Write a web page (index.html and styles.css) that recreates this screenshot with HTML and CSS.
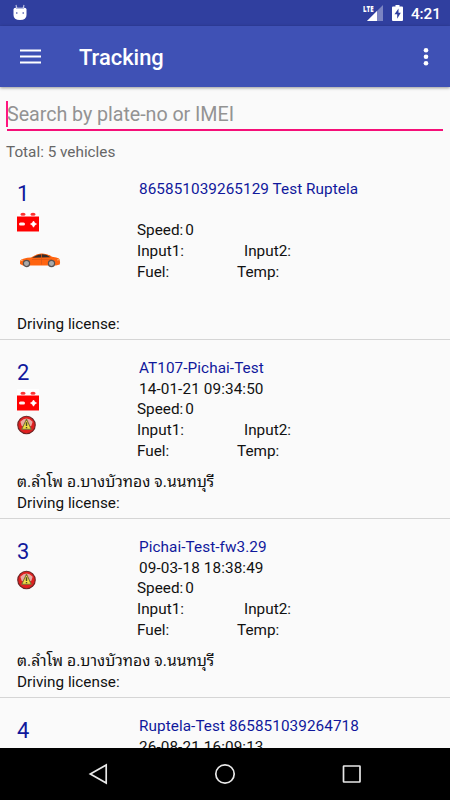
FILE: index.html
```html
<!DOCTYPE html>
<html lang="en">
<head>
<meta charset="utf-8">
<title>Tracking</title>
<link rel="stylesheet" href="styles.css">
</head>
<body>
<svg class="defs" width="0" height="0" aria-hidden="true">
  <defs>
    <symbol id="battery" viewBox="0 0 22 22">
      <path fill="#fff" d="M0 0h22v22H0z"/>
      <path fill="#f00" d="M0 6.500h22v15H0z"/>
      <ellipse cx="6" cy="4.300" rx="2.600" ry="1.500" fill="#f33"/><ellipse cx="16" cy="4.300" rx="2.600" ry="1.500" fill="#f33"/>
      <rect x="2" y="12.500" width="6" height="3" rx="1.500" fill="#fff0ee"/>
      <path fill="#fff" d="M16.500 11l1.200 1.900 1.800 1.100-1.800 1.200-1.200 2-1.200-2-1.800-1.200 1.800-1.100z" stroke="#fff" stroke-width=".7"/>
    </symbol>
    <symbol id="alert" viewBox="0 0 20 20">
      <circle cx="10" cy="10" r="9.200" fill="#e02020" stroke="#6b2525" stroke-width="1.200"/>
      <path d="M3.500 6.500Q10 0 16.500 6.500L15 11H5z" fill="#e9aaa2"/>
      <path d="M10 3.800l5 10.700H5z" fill="#f0df45" stroke="#78703a" stroke-width="1.100" stroke-linejoin="round"/>
      <path d="M10 7v4M10 12v1.300" stroke="#4d4526" stroke-width="1.500"/>
    </symbol>
  </defs>
</svg>
<div class="screen">
  <header class="status">
    <svg class="droid" viewBox="0 0 14 17"><path d="M3 1l1 4M11 1l-1 4" stroke="#b8bddf" stroke-width="1.200"/><path fill="#fff" d="M.5 5.500Q.5 3.800 2.500 3.800h9q2 0 2 1.700V11q0 5-6.500 5T.5 11z"/><path stroke="#b8bddf" stroke-width="1" d="M3 4.500h8"/><circle cx="3.800" cy="9" r=".8" fill="#303f9f"/><circle cx="10.200" cy="9" r=".8" fill="#303f9f"/></svg>
    <div class="signal"><span class="lte">LTE</span><svg viewBox="0 0 16 16"><path fill="#7b84c2" d="M16 0v16H0z"/><path fill="#fff" d="M10 6v10H0z"/></svg></div>
    <svg class="charge" viewBox="0 0 11 16"><path fill="#fff" d="M3.500 0h4v1.500H10q1 0 1 1V15q0 1-1 1H1q-1 0-1-1V2.500q0-1 1-1h2.500z"/><path fill="#303f9f" d="M6.500 3.600L2.500 9.300h2.700v4.500l3.600-6H6.500z"/></svg>
    <span class="time">4:21</span>
  </header>
  <nav class="bar">
    <svg class="menu" viewBox="0 0 21 15"><path d="M0 1.500h21M0 7.500h21M0 13.500h21" stroke="#fff" stroke-width="2"/></svg>
    <h1>Tracking</h1>
    <svg class="more" viewBox="0 0 6 20"><g fill="#fff"><circle cx="3" cy="3.300" r="2.300"/><circle cx="3" cy="9.800" r="2.300"/><circle cx="3" cy="16.300" r="2.300"/></g></svg>
  </nav>
  <main>
    <div class="search"><span>Search by plate-no or IMEI</span></div>
    <p class="total">Total: 5 vehicles</p>
    <section class="row">
      <div class="top">
        <div class="left"><b>1</b><svg class="battery"><use href="#battery"/></svg>
          <svg class="car" viewBox="0 0 42 16"><path fill="#ff6410" d="M1 8.500Q4 6 12 5.600 17 2 22 1.500q6-.6 11 3.300 5 .4 7 1.700 1.700 3 .7 6L37 13.500H4L1 12z"/><path fill="#322b2b" d="M13 5.700Q18 2.300 23 2.200q5-.1 8.500 3z"/><path stroke="#d95818" stroke-width=".8" d="M22.500 2v10.500M13 7.500h20"/><path d="M1 9l3-1M38 8l3-.5" stroke="#ffb073"/><g fill="#aaa" stroke="#575150" stroke-width="1.200"><circle cx="7.500" cy="11.500" r="3.100"/><circle cx="32.500" cy="11.500" r="3.100"/></g></svg></div>
        <div class="info"><strong>865851039265129 Test Ruptela</strong><time></time><span>Speed:<i>0</i></span><span class="pair"><em>Input1:</em>Input2:</span><span class="pair temp"><em>Fuel:</em>Temp:</span></div>
      </div>
      <p class="thai"></p><p>Driving license:</p>
    </section>
    <section class="row">
      <div class="top">
        <div class="left"><b>2</b><svg class="battery"><use href="#battery"/></svg><svg class="alert"><use href="#alert"/></svg></div>
        <div class="info"><strong>AT107-Pichai-Test</strong><time>14-01-21 09:34:50</time><span>Speed:<i>0</i></span><span class="pair"><em>Input1:</em>Input2:</span><span class="pair temp"><em>Fuel:</em>Temp:</span></div>
      </div>
      <p class="thai" lang="th">ต.ลำโพ อ.บางบัวทอง จ.นนทบุรี</p><p>Driving license:</p>
    </section>
    <section class="row">
      <div class="top">
        <div class="left"><b>3</b><svg class="alert"><use href="#alert"/></svg></div>
        <div class="info"><strong>Pichai-Test-fw3.29</strong><time>09-03-18 18:38:49</time><span>Speed:<i>0</i></span><span class="pair"><em>Input1:</em>Input2:</span><span class="pair temp"><em>Fuel:</em>Temp:</span></div>
      </div>
      <p class="thai" lang="th">ต.ลำโพ อ.บางบัวทอง จ.นนทบุรี</p><p>Driving license:</p>
    </section>
    <section class="row">
      <div class="top">
        <div class="left"><b>4</b></div>
        <div class="info"><strong>Ruptela-Test 865851039264718</strong><time>26-08-21 16:09:13</time></div>
      </div>
    </section>
  </main>
  <footer class="navbar">
    <svg viewBox="0 0 22 22"><path d="M18.200 2v18L2.300 11z"/></svg>
    <svg viewBox="0 0 22 22"><circle cx="11" cy="11" r="9.200"/></svg>
    <svg viewBox="0 0 22 22"><rect x="2.500" y="3" width="16.500" height="16" rx=".5"/></svg>
  </footer>
</div>
</body>
</html>
```
FILE: styles.css
```css
* { box-sizing: border-box; margin: 0; padding: 0; }
body { font-family: Roboto, "Noto Sans", sans-serif; background: #fafafa; }
.defs { position: absolute; }
svg { display: block; flex: none; }
.screen { width: 450px; height: 800px; display: flex; flex-direction: column; overflow: hidden; }
.status { height: 26px; flex: none; background: #303f9f; display: flex; align-items: flex-start; padding: 0 9px 0 13px; color: #fff; }
.droid { width: 14px; height: 17px; margin: 4px auto 0 0; }
.signal { display: flex; align-items: flex-start; margin-top: 5px; }
.signal svg { width: 16px; height: 16px; margin-left: -7px; }
.lte { font: 800 9px/8px "Open Sans", sans-serif; width: 11px; display: block; transform: scaleX(.68); transform-origin: 0 0; white-space: nowrap; position: relative; z-index: 1; }
.charge { width: 11px; height: 16px; margin: 5px 8px 0 9px; }
.time { font-size: 15.300px; line-height: 18px; font-weight: 500; margin-top: 5px; }
.bar { height: 61px; flex: none; background: #3f51b5; display: flex; align-items: center; padding: 0 21px 0 20px; color: #fff; z-index: 1; box-shadow: 0 1px 3px #0006; }
.menu { width: 21px; height: 15px; margin-top: -1px; }
h1 { font-size: 21.900px; line-height: 26px; font-weight: 500; margin: 2px auto 0 38px; }
.more { width: 6px; height: 20px; }
main { flex: 1; min-height: 0; overflow: hidden; }
.search { margin: 14px 7px 0; height: 30px; border-bottom: 2px solid #f50f78; }
.search span { display: block; height: 26px; margin-left: -1px; padding-left: 1px; background: linear-gradient(#ff1680, #ff1680) 0 0 / 2px 26px no-repeat; font-size: 19.700px; letter-spacing: -.05px; line-height: 28px; color: #939393; }
.total { font-size: 15.300px; line-height: 20px; color: #666; padding: 0 6px; margin: 11px 0 -1px; }
.row { height: 179px; padding: 18px 17px 0; border-bottom: 1px solid #d5d5d5; font-size: 15.300px; line-height: 20.700px; color: #111; }
.top { display: flex; height: 114px; }
.left { width: 120px; }
.left b { display: block; font-size: 21.900px; line-height: 26px; font-weight: 400; color: #10189c; margin-top: 2px; }
.battery { width: 22px; height: 22px; margin-top: 3px; }
.alert { width: 19px; height: 20px; margin-top: 4px; }
.left b + .alert { margin-top: 5px; }
.car { width: 42px; height: 16px; margin: 20px 0 0 2px; }
.info { display: flex; flex-direction: column; }
.info > * { height: 20.700px; white-space: nowrap; }
.info strong { font-weight: 400; color: #10189c; padding-left: 2px; letter-spacing: .07px; }
.info time { padding-left: 2px; letter-spacing: .1px; }
i, em { font-style: normal; }
i { margin-left: 2px; }
.pair { display: grid; grid-template-columns: 107px auto; }
.temp { grid-template-columns: 100px auto; }
.thai { height: 20.700px; white-space: nowrap; font-family: Roboto, "Noto Sans Thai Looped", Loma, Waree, Garuda, serif; font-size: 15.700px; }
.navbar { height: 52px; flex: none; background: #000; display: flex; justify-content: center; align-items: center; gap: 104.500px; }
.navbar svg { width: 22px; height: 22px; fill: none; stroke: #e8e8e8; stroke-width: 1.700; }
```
